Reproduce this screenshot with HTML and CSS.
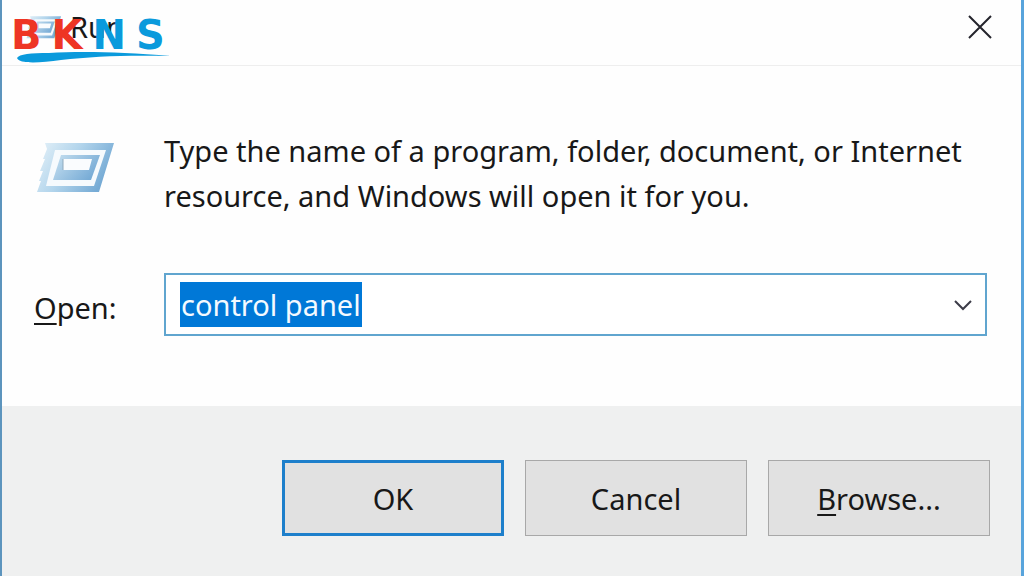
FILE: index.html
```html
<!DOCTYPE html>
<html lang="en">
<head>
<meta charset="utf-8">
<meta name="viewport" content="width=device-width, initial-scale=1">
<title>Run</title>
<link rel="stylesheet" href="styles.css">
</head>
<body>
<main class="dialog">
  <header class="titlebar">
    <svg class="title-icon" viewBox="0 0 80 52" aria-hidden="true"><use href="#run-shape"/></svg>
    <h1 class="title">Run</h1>
    <button class="close" type="button" aria-label="Close">
      <svg width="26" height="26" viewBox="0 0 26 26" aria-hidden="true"><path d="M2 2L24 24M24 2L2 24" fill="none" stroke="#24242c" stroke-width="2"/></svg>
    </button>
    <div class="brand">
      <div class="brand-name"><span class="red">B</span><span class="red">K</span><span class="blue">N</span><span class="blue">S</span></div>
      <svg class="swoosh" viewBox="0 0 154 11" aria-hidden="true"><path d="M0 6C2 2 14 1 32 1C65-1 104 0 154 4C112 3 76 4 44 8C22 11 2 12 0 6Z" fill="#0a9adc"/></svg>
    </div>
  </header>
  <section class="content">
    <svg class="run-icon" viewBox="0 0 80 52" aria-hidden="true">
      <defs>
        <linearGradient id="ice" x1="0" y1="0" x2="1" y2="0.4">
          <stop offset="0" stop-color="#e6f2f9"/><stop offset="0.5" stop-color="#b3d5ec"/><stop offset="1" stop-color="#76abd5"/>
        </linearGradient>
        <linearGradient id="inner" x1="0" y1="0" x2="1" y2="0.5">
          <stop offset="0" stop-color="#c8e1f1"/><stop offset="1" stop-color="#78acd6"/>
        </linearGradient>
      </defs>
      <g id="run-shape">
        <path d="M9 2H78L63 51H1L5 40H3L7 30H4L9 18H7L11 8Z" fill="url(#ice)"/>
        <path d="M19 9H70L58 45H10Z" fill="#f6fafd"/>
        <path d="M25 14H64L55 39H17Z" fill="url(#inner)"/>
        <path d="M27 18H56L53 29H27Z" fill="#fafcfe"/>
        <path d="M27 18V29" stroke="#8faabd" fill="none"/>
      </g>
    </svg>
    <p class="message">Type the name of a program, folder, document, or Internet resource, and Windows will open it for you.</p>
    <label class="open-label" for="command"><u>O</u>pen:</label>
    <div class="combo">
      <input class="command" id="command" type="text" value="control panel" size="12" autocomplete="off">
      <button class="drop" type="button" aria-label="Show recent commands">
        <svg width="18" height="12" viewBox="0 0 18 12" aria-hidden="true"><path d="M1 2L9 10L17 2" fill="none" stroke="#3c3c48" stroke-width="2"/></svg>
      </button>
    </div>
  </section>
  <footer class="actions">
    <button class="action primary" type="button">OK</button>
    <button class="action" type="button">Cancel</button>
    <button class="action" type="button"><span><u>B</u>rowse...</span></button>
  </footer>
</main>
</body>
</html>
```
FILE: styles.css
```css
* { box-sizing: border-box; }
body {
  margin: 0;
  background: #fefefe;
  color: #181818;
  font: 29px/45px "Noto Sans", "Open Sans", sans-serif;
}
button, input { font: inherit; color: inherit; }
u { text-underline-offset: 4px; text-decoration-thickness: 2px; text-decoration-skip-ink: none; }
.dialog {
  display: flex;
  flex-direction: column;
  min-height: 100vh;
  border-left: 2px solid #5c94bd;
  border-right: 3px solid #58a4dc;
}
.titlebar {
  position: relative;
  display: flex;
  align-items: center;
  gap: 8px;
  height: 66px;
  padding: 0 24px 12px;
  border-bottom: 1px solid #eeeeee;
}
.title-icon { width: 36px; height: 26px; }
.title { margin: 0; font-size: 29px; font-weight: 400; }
.close {
  display: flex;
  margin-left: auto;
  padding: 4px;
  border: 0;
  background: none;
}
.brand { position: absolute; left: 9px; top: 20px; }
.brand-name {
  display: flex;
  gap: 10px;
  font: 700 40px/30px "DejaVu Sans", sans-serif;
}
.red { color: #ee3524; }
.blue { color: #0a9adc; }
.swoosh { display: block; width: 154px; height: 11px; margin: 2px 0 0 6px; }
.content {
  display: grid;
  grid-template-columns: 114px 1fr;
  column-gap: 16px;
  row-gap: 55px;
  align-items: center;
  padding: 62px 34px 70px 32px;
}
.run-icon { width: 80px; height: 52px; margin-left: 2px; align-self: start; margin-top: 13px; }
.message { margin: 0; }
.open-label { padding-top: 6px; }
.combo {
  display: flex;
  align-items: center;
  justify-content: space-between;
  height: 63px;
  padding: 0 13px 0 14px;
  border: 2px solid #60a5cf;
  background: #ffffff;
}
.command {
  field-sizing: content;
  height: 45px;
  padding: 0 1px;
  border: 0;
  outline: 0;
  background: #0078d7;
  color: #f4faff;
}
.drop { display: flex; padding: 0; border: 0; background: none; }
.actions {
  flex: 1;
  display: flex;
  justify-content: flex-end;
  align-items: flex-start;
  gap: 21px;
  padding: 54px 31px 40px;
  background: #eff0f0;
}
.action {
  width: 222px;
  height: 76px;
  padding: 0;
  border: 1px solid #a8a8a8;
  background: #e1e1e1;
}
.primary { border: 3px solid #1d7fcb; }
```
